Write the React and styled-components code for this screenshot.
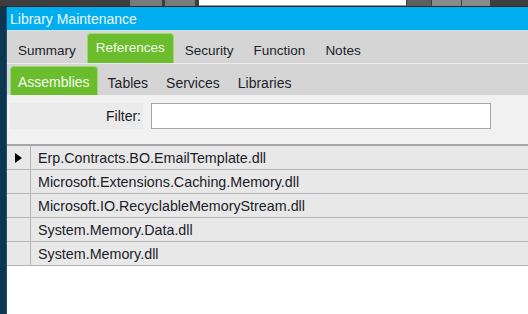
import React from 'react';
import styled, { createGlobalStyle } from 'styled-components';

const GlobalStyle = createGlobalStyle`
    html, body {
        margin: 0;
        padding: 0;
        background: #ffffff;
    }
    body {
        font-family: "Liberation Sans", Arial, sans-serif;
        overflow: hidden;
    }
`;

const Page = styled.div`
    width: 528px;
    height: 314px;
    display: flex;
    flex-direction: column;
    overflow: hidden;
`;

const TopStrip = styled.div`
    height: 6px;
    display: flex;
    background: #3e3e3e;
    border-bottom: 1px solid #2a2a2a;
`;

const StripBlock = styled.div`
    width: ${p => p.w}px;
    margin-left: ${p => p.gap || 0}px;
    background: ${p => p.color};
    border-bottom: 1px solid ${p => p.edge || 'transparent'};
`;

const Body = styled.div`
    flex: 1;
    display: flex;
`;

const LeftRail = styled.div`
    width: 6px;
    background: #0d3650;
    border-right: 1px solid #1d5675;
`;

const Main = styled.div`
    flex: 1;
    display: flex;
    flex-direction: column;
    background: #ffffff;
`;

const TitleBar = styled.div`
    height: 23px;
    padding-left: 3px;
    display: flex;
    align-items: center;
    background: #00adef;
    color: #eef9ff;
    font-size: 14px;
    border-bottom: 1px solid #cfe4ec;
`;

const TabStrip = styled.div`
    height: ${p => p.h}px;
    display: flex;
    align-items: flex-end;
    padding-left: ${p => p.indent}px;
    gap: ${p => p.gap}px;
    background: #d5d5d5;
    border-top: ${p => (p.sub ? '1px solid #ececec' : 'none')};
`;

const Tab = styled.div`
    height: ${p => p.h}px;
    padding: ${p => p.pt}px ${p => p.pad}px ${p => p.pb}px;
    display: flex;
    align-items: center;
    box-sizing: border-box;
    font-size: ${p => p.size}px;
    color: ${p => (p.active ? '#f4fbee' : '#1e1e2c')};
    background: ${p => (p.active ? '#6bbd2d' : 'transparent')};
    border: 1px solid ${p => (p.active ? '#9fd86e' : 'transparent')};
    border-bottom: none;
    border-radius: 4px 4px 0 0;
`;

const FilterPanel = styled.div`
    height: 50px;
    display: flex;
    align-items: flex-start;
    gap: 8px;
    padding: 8px 0 0 3px;
    box-sizing: border-box;
    background: #f1f1f1;
`;

const FilterLabel = styled.div`
    width: 133px;
    height: 26px;
    display: flex;
    align-items: center;
    justify-content: flex-end;
    padding-right: 2px;
    box-sizing: border-box;
    background: #ebebeb;
    font-size: 14px;
    color: #1a1a1a;
`;

const FilterInput = styled.input`
    width: 340px;
    height: 26px;
    box-sizing: border-box;
    border: 1px solid #a5a5a5;
    background: #ffffff;
    outline: none;
`;

const Grid = styled.div`
    display: flex;
    flex-direction: column;
    border-top: 2px solid #a8a8a8;
    margin-top: -1px;
`;

const Row = styled.div`
    height: 24px;
    display: flex;
    box-sizing: border-box;
    background: #e8e8e8;
    border-bottom: 1px solid #b6b6b6;
`;

const Indicator = styled.div`
    width: 23px;
    display: flex;
    align-items: center;
    justify-content: center;
    border-right: 1px solid #b6b6b6;
`;

const Cell = styled.div`
    flex: 1;
    display: flex;
    align-items: center;
    padding-left: 7px;
    font-size: 14.3px;
    color: #1c1c2a;
    white-space: nowrap;
`;

const Arrow = () => (
    <svg width="7" height="10" viewBox="0 0 7 10">
        <path d="M0 0 L7 5 L0 10 Z" fill="#000" />
    </svg>
);

const tabs = ['Summary', 'References', 'Security', 'Function', 'Notes'];
const subTabs = ['Assemblies', 'Tables', 'Services', 'Libraries'];
const assemblies = [
    'Erp.Contracts.BO.EmailTemplate.dll',
    'Microsoft.Extensions.Caching.Memory.dll',
    'Microsoft.IO.RecyclableMemoryStream.dll',
    'System.Memory.Data.dll',
    'System.Memory.dll',
];

const App = () => {
    return (
        <Page>
            <GlobalStyle />
            <TopStrip>
                <StripBlock w={130} color="#3e3e3e" />
                <StripBlock w={32} color="#7a7a7a" />
                <StripBlock w={30} gap={3} color="#7a7a7a" />
                <StripBlock w={207} gap={4} color="#ffffff" edge="#999" />
                <StripBlock w={24} gap={1} color="#5e5e5e" />
                <StripBlock w={29} gap={1} color="#8a8a8a" />
                <StripBlock w={28} gap={1} color="#8a8a8a" />
            </TopStrip>
            <Body>
                <LeftRail />
                <Main>
                    <TitleBar>Library Maintenance</TitleBar>
                    <TabStrip h={32} indent={2} gap={2}>
                        {tabs.map(t => {
                            const on = t === 'References';
                            return (
                                <Tab key={t} active={on} h={30} pad={8} pt={on ? 0 : 4} pb={on ? 2 : 0} size={13.5}>
                                    {t}
                                </Tab>
                            );
                        })}
                    </TabStrip>
                    <TabStrip sub h={31} indent={3} gap={2}>
                        {subTabs.map(t => {
                            const on = t === 'Assemblies';
                            return (
                                <Tab key={t} active={on} h={29} pad={7} pt={on ? 2 : 4} pb={0} size={14}>
                                    {t}
                                </Tab>
                            );
                        })}
                    </TabStrip>
                    <FilterPanel>
                        <FilterLabel>Filter:</FilterLabel>
                        <FilterInput />
                    </FilterPanel>
                    <Grid>
                        {assemblies.map((a, i) => (
                            <Row key={a}>
                                <Indicator>{i === 0 && <Arrow />}</Indicator>
                                <Cell>{a}</Cell>
                            </Row>
                        ))}
                    </Grid>
                </Main>
            </Body>
        </Page>
    );
};

export default App;
